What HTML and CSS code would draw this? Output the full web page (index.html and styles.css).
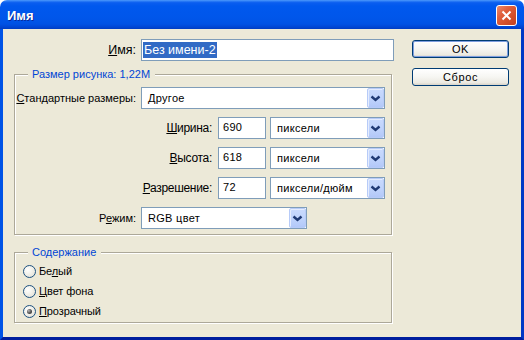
FILE: index.html
```html
<!DOCTYPE html>
<html lang="ru">
<head>
<meta charset="utf-8">
<title>Имя</title>
<link rel="stylesheet" href="styles.css">
</head>
<body>
<div class="window">
  <div class="titlebar">
    <span class="title">Имя</span>
    <span class="close">
      <svg width="13" height="13" viewBox="0 0 13 13"><path d="M2.5 2.5 L10.5 10.5 M10.5 2.5 L2.5 10.5" stroke="#fff" stroke-width="2" fill="none"/></svg>
    </span>
  </div>
  <div class="client">
    <div class="main">
      <div class="name-row">
        <span class="lbl big name-lbl"><u>И</u>мя:</span>
        <div class="field name-field"><span class="sel">Без имени-2</span></div>
      </div>

      <div class="group group-size">
        <div class="legend">Размер рисунка: 1,22M</div>
        <div class="rows">
          <div class="row">
            <span class="lbl short"><u>С</u>тандартные размеры:</span>
            <div class="combo w244"><span>Другое</span><span class="arrow"><svg width="15" height="18" viewBox="0 0 15 18"><polyline points="3.5,7.5 7.5,11 11.5,7.5" fill="none" stroke="#1F3A74" stroke-width="2.4"/></svg></span></div>
          </div>
          <div class="row">
            <span class="lbl big long"><u>Ш</u>ирина:</span>
            <div class="field num">690</div>
            <div class="combo w115"><span>пиксели</span><span class="arrow"><svg width="15" height="18" viewBox="0 0 15 18"><polyline points="3.5,7.5 7.5,11 11.5,7.5" fill="none" stroke="#1F3A74" stroke-width="2.4"/></svg></span></div>
          </div>
          <div class="row">
            <span class="lbl big long"><u>В</u>ысота:</span>
            <div class="field num">618</div>
            <div class="combo w115"><span>пиксели</span><span class="arrow"><svg width="15" height="18" viewBox="0 0 15 18"><polyline points="3.5,7.5 7.5,11 11.5,7.5" fill="none" stroke="#1F3A74" stroke-width="2.4"/></svg></span></div>
          </div>
          <div class="row">
            <span class="lbl big long"><u>Р</u>азрешение:</span>
            <div class="field num">72</div>
            <div class="combo w115"><span>пиксели/дюйм</span><span class="arrow"><svg width="15" height="18" viewBox="0 0 15 18"><polyline points="3.5,7.5 7.5,11 11.5,7.5" fill="none" stroke="#1F3A74" stroke-width="2.4"/></svg></span></div>
          </div>
          <div class="row">
            <span class="lbl short">Р<u>е</u>жим:</span>
            <div class="combo w166"><span>RGB цвет</span><span class="arrow"><svg width="15" height="18" viewBox="0 0 15 18"><polyline points="3.5,7.5 7.5,11 11.5,7.5" fill="none" stroke="#1F3A74" stroke-width="2.4"/></svg></span></div>
          </div>
        </div>
      </div>

      <div class="group group-content">
        <div class="legend">Содержание</div>
        <div class="radios">
          <div class="radio"><span class="dot"></span><span>Бе<u>л</u>ый</span></div>
          <div class="radio"><span class="dot"></span><span><u>Ц</u>вет фона</span></div>
          <div class="radio"><span class="dot on"></span><span><u>П</u>розрачный</span></div>
        </div>
      </div>
    </div>

    <div class="side">
      <button class="btn default">OK</button>
      <button class="btn">Сброс</button>
    </div>
  </div>
</div>
</body>
</html>
```

FILE: styles.css
```css
html, body {
  margin: 0;
  padding: 0;
  background: #ffffff;
}

.window {
  width: 524px;
  height: 340px;
  display: flex;
  flex-direction: column;
  font-family: "Liberation Sans", Arial, sans-serif;
  color: #000;
}

.titlebar {
  height: 29px;
  flex: none;
  display: flex;
  align-items: flex-start;
  border-radius: 7px 7px 0 0;
  background: linear-gradient(to bottom,
    #4A97FB 0px, #3584F7 1px, #1467F2 2px, #0A5DEF 3px,
    #0058EE 6px, #0056EA 18px, #0052E4 24px,
    #004ADA 26px, #0042CC 28px, #003BC0 29px);
}

.title {
  margin: 8px 0 0 7px;
  font-weight: bold;
  font-size: 13px;
  line-height: 15px;
  color: #fff;
  text-shadow: 1px 1px 0 #0A2A9A;
}

.close {
  margin: 5px 7px 0 auto;
  width: 21px;
  height: 21px;
  box-sizing: border-box;
  border: 1px solid #fff;
  border-radius: 3px;
  background: linear-gradient(135deg, #EC8A6C 0%, #E0603D 35%, #D4502B 65%, #C24220 100%);
  display: flex;
  align-items: center;
  justify-content: center;
}

.close svg {
  display: block;
}

.client {
  flex: 1;
  display: flex;
  background: #ECE9D8;
  padding: 10px 0 0 11px;
  border-left: 3px solid #0053E6;
  border-right: 3px solid #0038C6;
  border-bottom: 3px solid #001E9E;
}

.main {
  width: 380px;
  flex: none;
}

.name-row {
  display: flex;
  align-items: center;
  height: 22px;
}

.lbl {
  flex: none;
  text-align: right;
  font-size: 11px;
  letter-spacing: 0;
  white-space: nowrap;
}

.lbl.big {
  font-size: 12px;
  letter-spacing: -0.3px;
}

.name-lbl {
  width: 122px;
  margin-right: 5px;
}

.name-lbl.big {
  font-size: 12.5px;
  letter-spacing: 0;
}

.field {
  box-sizing: border-box;
  height: 22px;
  border: 1px solid #7F9DB9;
  background: #fff;
  display: flex;
  align-items: center;
  font-size: 11px;
  letter-spacing: 0.3px;
}

.name-field {
  width: 253px;
  padding-left: 1px;
  font-size: 12.5px;
  letter-spacing: 0;
}

.sel {
  background: #316AC5;
  color: #fff;
  line-height: 16px;
  padding: 0 1px;
}

.group {
  box-sizing: border-box;
  width: 378px;
  border: 1px solid #ACA899;
  box-shadow: inset 1px 1px 0 #fff, 1px 1px 0 #fff;
}

.group-size {
  margin-top: 13px;
  height: 161px;
}

.group-content {
  margin-top: 17px;
  height: 71px;
}

.legend {
  width: fit-content;
  height: 13px;
  line-height: 13px;
  margin: -7px 0 0 13px;
  padding: 0 5px 0 4px;
  background: #ECE9D8;
  color: #0046D5;
  font-size: 11px;
  letter-spacing: 0;
  white-space: nowrap;
}

.rows {
  display: flex;
  flex-direction: column;
  gap: 8px;
  padding-top: 6px;
}

.row {
  display: flex;
  align-items: center;
  height: 22px;
}

.lbl.short {
  width: 121px;
  margin-right: 5px;
}

.lbl.long {
  width: 197px;
  margin-right: 6px;
}

.num {
  width: 48px;
  padding-left: 4px;
  margin-right: 4px;
  padding-bottom: 2px;
}

.combo {
  box-sizing: border-box;
  height: 22px;
  border: 1px solid #7F9DB9;
  background: #fff;
  display: flex;
  align-items: center;
  padding-left: 6px;
  font-size: 11px;
  letter-spacing: 0.3px;
  white-space: nowrap;
}

.w244 { width: 244px; }
.w115 { width: 115px; }
.w166 { width: 166px; }

.arrow {
  margin-left: auto;
  box-sizing: border-box;
  width: 17px;
  height: 20px;
  border: 1px solid #B7CBF8;
  border-radius: 2px;
  background: linear-gradient(to bottom, #C9DAFD 0%, #BED2FB 60%, #B2C8F8 100%);
  box-shadow: inset 1px 1px 0 #E4ECFE;
  display: flex;
  align-items: center;
  justify-content: center;
}

.arrow svg {
  display: block;
}

.radios {
  padding-top: 2px;
}

.radio {
  display: flex;
  align-items: center;
  height: 20px;
  padding-left: 8px;
  font-size: 11px;
  letter-spacing: -0.1px;
}

.dot {
  flex: none;
  width: 13px;
  height: 13px;
  box-sizing: border-box;
  border-radius: 50%;
  border: 1px solid #1C5180;
  background: radial-gradient(circle at 35% 35%, #ffffff 0%, #F3F2EC 40%, #DCDBD1 100%);
  margin-right: 3px;
  display: flex;
  align-items: center;
  justify-content: center;
}

.dot.on::after {
  content: "";
  width: 5px;
  height: 5px;
  border-radius: 50%;
  background: radial-gradient(circle at 35% 35%, #B8B8B8 0%, #555 50%, #2A2A2A 100%);
}

.side {
  margin-left: 18px;
  width: 97px;
  flex: none;
  display: flex;
  flex-direction: column;
  gap: 10px;
  padding-top: 1px;
}

.btn {
  box-sizing: border-box;
  height: 18px;
  width: 97px;
  border: 1px solid #003C74;
  border-radius: 3px;
  background: linear-gradient(to bottom, #FFFFFF 0%, #F6F6F2 50%, #ECEAE2 85%, #D8D3C8 100%);
  font-family: "Liberation Sans", Arial, sans-serif;
  font-size: 11px;
  letter-spacing: 0.6px;
  color: #000;
  padding: 0;
}

.btn.default {
  box-shadow: inset 0 0 0 1px #7E9EDF;
}
```
